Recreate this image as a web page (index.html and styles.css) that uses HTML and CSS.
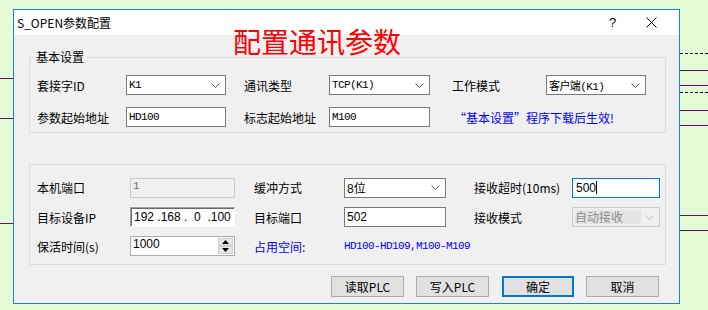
FILE: index.html
```html
<!DOCTYPE html>
<html>
<head>
  <meta charset="utf-8">
  <title>S_OPEN参数配置</title>
  <link rel="stylesheet" href="styles.css">
</head>
<body>
  <svg class="backdrop" width="708" height="310">
    <g stroke="#800080" stroke-width="1">
      <line x1="0" y1="78.5" x2="13" y2="78.5"/>
      <line x1="0" y1="118.5" x2="13" y2="118.5"/>
      <line x1="0" y1="223.5" x2="13" y2="223.5"/>
      <line x1="680" y1="70.5" x2="708" y2="70.5"/>
      <line x1="680" y1="85.5" x2="708" y2="85.5"/>
      <line x1="680" y1="110.5" x2="708" y2="110.5"/>
      <line x1="680" y1="125.5" x2="708" y2="125.5"/>
      <line x1="680" y1="215.5" x2="708" y2="215.5"/>
      <line x1="680" y1="230.5" x2="708" y2="230.5"/>
    </g>
    <g stroke="#000" stroke-width="1" stroke-dasharray="3 2">
      <line x1="680" y1="53.5" x2="708" y2="53.5"/>
      <line x1="680" y1="92.5" x2="708" y2="92.5"/>
    </g>
  </svg>

  <div class="dialog">
    <div class="titlebar">
      <span class="title">S_OPEN参数配置</span>
      <span class="help">?</span>
      <span class="close">
        <svg width="11" height="11" viewBox="0 0 11 11"><path d="M0.5 0.5L10.5 10.5M10.5 0.5L0.5 10.5" stroke="#000" stroke-width="1"/></svg>
      </span>
    </div>
    <div class="banner">配置通讯参数</div>

    <div class="content">
      <fieldset class="group basic">
        <legend>基本设置</legend>
        <div class="grid">
          <span class="lbl">套接字ID</span>
          <div class="combo"><span class="mono">K1</span><svg class="arrow" width="9" height="5"><path d="M0.5 0.5L4.5 4.5L8.5 0.5" fill="none" stroke="#555"/></svg></div>
          <span class="lbl mid">通讯类型</span>
          <div class="combo"><span class="mono">TCP(K1)</span><svg class="arrow" width="9" height="5"><path d="M0.5 0.5L4.5 4.5L8.5 0.5" fill="none" stroke="#555"/></svg></div>
          <span class="lbl far">工作模式</span>
          <div class="combo"><span class="mono">客户端(K1)</span><svg class="arrow" width="9" height="5"><path d="M0.5 0.5L4.5 4.5L8.5 0.5" fill="none" stroke="#555"/></svg></div>

          <span class="lbl">参数起始地址</span>
          <div class="field"><span class="mono">HD100</span></div>
          <span class="lbl mid">标志起始地址</span>
          <div class="field"><span class="mono">M100</span></div>
          <span class="note wide">“基本设置”程序下载后生效!</span>
        </div>
      </fieldset>

      <fieldset class="group net">
        <div class="grid">
          <span class="lbl">本机端口</span>
          <div class="field disabled"><span class="mono">1</span></div>
          <span class="lbl mid">缓冲方式</span>
          <div class="combo"><span class="sans">8位</span><svg class="arrow" width="9" height="5"><path d="M0.5 0.5L4.5 4.5L8.5 0.5" fill="none" stroke="#555"/></svg></div>
          <span class="lbl far">接收超时(10ms)</span>
          <div class="field focus"><span class="sans">500</span><span class="caret"></span></div>

          <span class="lbl">目标设备IP</span>
          <div class="field ip"><span class="sans">192 .168 . &nbsp;0 &nbsp;.100</span></div>
          <span class="lbl mid">目标端口</span>
          <div class="field"><span class="sans">502</span></div>
          <span class="lbl far">接收模式</span>
          <div class="combo disabled"><span class="pick">自动接收</span><svg class="arrow" width="9" height="5"><path d="M0.5 0.5L4.5 4.5L8.5 0.5" fill="none" stroke="#bbb"/></svg></div>

          <span class="lbl">保活时间(s)</span>
          <div class="field spin">
            <span class="sans">1000</span>
            <div class="spinner">
              <span class="step"><svg width="7" height="4"><path d="M3.5 0L7 4H0Z" fill="#000"/></svg></span>
              <span class="step"><svg width="7" height="4"><path d="M0 0H7L3.5 4Z" fill="#000"/></svg></span>
            </div>
          </div>
          <span class="note mid">占用空间:</span>
          <span class="mono blue wide">HD100-HD109,M100-M109</span>
        </div>
      </fieldset>

      <div class="buttons">
        <button class="btn">读取PLC</button>
        <button class="btn">写入PLC</button>
        <button class="btn default">确定</button>
        <button class="btn">取消</button>
      </div>
    </div>
  </div>
</body>
</html>
```

FILE: styles.css
```css
html, body {
  margin: 0;
  background-color: #e3fcd5;
  font-family: "Noto Sans CJK SC", "Liberation Sans", sans-serif;
  font-size: 12px;
  overflow: hidden;
}

body {
  position: relative;
  width: 708px;
  height: 310px;
}

.backdrop {
  position: absolute;
  top: 0;
  left: 0;
}

.dialog {
  position: relative;
  box-sizing: border-box;
  margin: 9px 0 0 13px;
  width: 667px;
  height: 295px;
  border: 1px solid #1883d7;
  background-color: #f0f0f0;
}

.titlebar {
  display: flex;
  align-items: center;
  height: 25px;
  background-color: #fff;
  padding-left: 3px;
}

.title {
  flex: 1;
  font-size: 12px;
  color: #000;
}

.help {
  width: 12px;
  margin-right: 25px;
  font-size: 13px;
  font-family: "Liberation Sans", sans-serif;
}

.close {
  display: flex;
  width: 23px;
  margin-right: 10px;
}

.banner {
  position: absolute;
  left: 219px;
  top: 17px;
  font-size: 28px;
  line-height: 28px;
  color: #f00;
}

.content {
  padding: 0 13px 0 15px;
}

.group {
  margin: 0;
  border: 1px solid #dcdcdc;
  min-width: 0;
}

.basic {
  margin-top: 15px;
  padding: 11px 0 5px 7px;
}

.basic legend {
  margin-left: -4px;
  padding: 0 3px;
  line-height: 14px;
  font-size: 12px;
}

.net {
  margin-top: 31px;
  padding: 13px 0 8px 7px;
}

.grid {
  display: grid;
  align-items: center;
}

.basic .grid {
  grid-template-columns: 89px 100px 103px 101px 116px 100px;
  grid-template-rows: 20px 20px;
  row-gap: 12px;
}

.net .grid {
  grid-template-columns: 93px 105px 109px 102px 126px 88px;
  grid-template-rows: 20px 20px 20px;
  row-gap: 9px;
}

.net .grid > :nth-child(-n+6) {
  margin-bottom: 1px;
}

.lbl {
  color: #000;
  white-space: nowrap;
}

.basic .mid { padding-left: 18px; }
.basic .far { padding-left: 22px; }
.net .mid { padding-left: 19px; }
.net .far { padding-left: 28px; }

.wide {
  grid-column: span 2;
  white-space: nowrap;
}

.note {
  color: #00f;
  white-space: nowrap;
}

.basic .note {
  padding-left: 24px;
}

.mono {
  font-family: "Liberation Mono", "Noto Sans CJK SC", monospace;
  font-size: 11px;
  letter-spacing: -0.6px;
}

.sans {
  font-family: "Liberation Sans", "Noto Sans CJK SC", sans-serif;
  font-size: 12px;
}

.blue {
  color: #00f;
}

.combo, .field {
  box-sizing: border-box;
  height: 20px;
  display: flex;
  align-items: center;
  background-color: #fff;
  border: 1px solid #7a7a7a;
  padding-left: 2px;
  white-space: nowrap;
}

.combo {
  justify-content: space-between;
  padding-right: 5px;
}

.combo.disabled {
  border-color: #cccccc;
  background-color: #f0f0f0;
  padding-left: 2px;
}

.pick {
  background-color: #e5e5e5;
  color: #8d8d8d;
  width: 66px;
  line-height: 14px;
  font-size: 12px;
}

.field.disabled {
  border-color: #cccccc;
  background-color: #f0f0f0;
  color: #6d6d6d;
  align-items: flex-start;
  padding-top: 1px;
}

.field.focus {
  border-color: #0078d7;
  padding-left: 3px;
}

.caret {
  width: 1px;
  height: 13px;
  background-color: #000;
}

.field.ip {
  border-color: #a0a0a0 #fff #fff #a0a0a0;
  box-shadow: inset 1px 1px 0 #696969;
  padding-left: 3px;
}

.field.spin {
  border-color: #adadad;
  justify-content: space-between;
  align-items: flex-start;
  padding-right: 1px;
}

.spinner {
  display: flex;
  flex-direction: column;
  margin-top: 1px;
}

.step {
  box-sizing: border-box;
  width: 15px;
  height: 8px;
  display: flex;
  align-items: center;
  justify-content: center;
  background-color: #e6e6e6;
  border: 1px solid #cfcfcf;
}

.buttons {
  display: flex;
  justify-content: flex-end;
  gap: 12px;
  margin-top: 11px;
  padding-right: 7px;
}

.btn {
  box-sizing: border-box;
  width: 73px;
  height: 21px;
  padding: 0;
  background-color: #e1e1e1;
  border: 1px solid #adadad;
  font-family: "Noto Sans CJK SC", "Liberation Sans", sans-serif;
  font-size: 12px;
  color: #000;
}

.btn.default {
  border: 2px solid #0078d7;
  width: 72px;
  margin-left: 1px;
}
```
